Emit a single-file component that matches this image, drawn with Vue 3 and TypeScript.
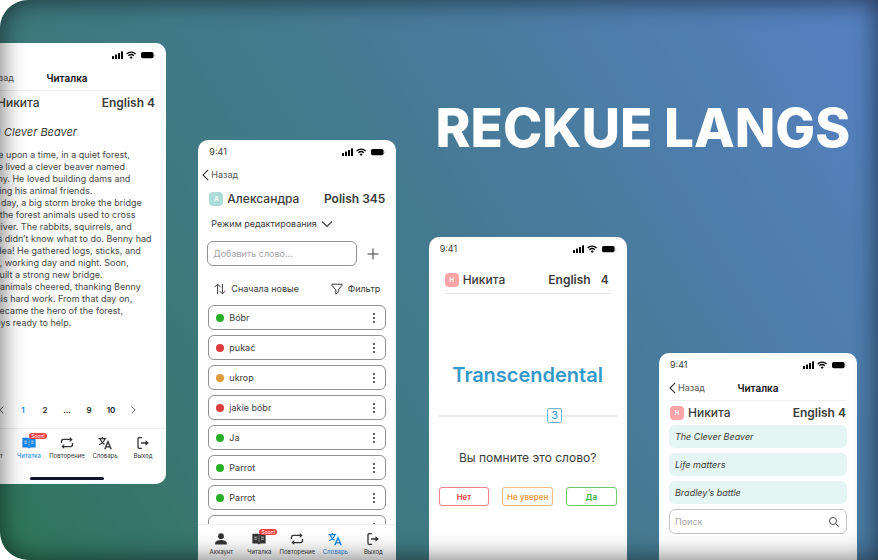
<script setup lang="ts">
import { ref } from 'vue'

type Level = 'good' | 'bad' | 'mid'

interface Word {
  id: number
  text: string
  level: Level
}

interface Tab {
  icon: string
  label: string
  soon?: boolean
}

const tabs: Tab[] = [
  { icon: 'account', label: 'Аккаунт' },
  { icon: 'book', label: 'Читалка', soon: true },
  { icon: 'repeat', label: 'Повторение' },
  { icon: 'translate', label: 'Словарь' },
  { icon: 'exit', label: 'Выход' },
]

const words: Word[] = [
  { id: 1, text: 'Bóbr', level: 'good' },
  { id: 2, text: 'pukać', level: 'bad' },
  { id: 3, text: 'ukrop', level: 'mid' },
  { id: 4, text: 'jakie bóbr', level: 'bad' },
  { id: 5, text: 'Ja', level: 'good' },
  { id: 6, text: 'Parrot', level: 'good' },
  { id: 7, text: 'Parrot', level: 'good' },
  { id: 8, text: 'Parrot', level: 'good' },
]

const story: string[] = [
  'Once upon a time, in a quiet forest,',
  'there lived a clever beaver named',
  'Benny. He loved building dams and',
  'helping his animal friends.',
  'One day, a big storm broke the bridge',
  'that the forest animals used to cross',
  'the river. The rabbits, squirrels, and',
  'birds didn’t know what to do. Benny had',
  'an idea! He gathered logs, sticks, and',
  'mud, working day and night. Soon,',
  'he built a strong new bridge.',
  'The animals cheered, thanking Benny',
  'for his hard work. From that day on,',
  'he became the hero of the forest,',
  'always ready to help.',
]

const pages: string[] = ['1', '2', '...', '9', '10']
const texts: string[] = ['The Clever Beaver', 'Life matters', 'Bradley’s battle']

const newWord = ref('')
const search = ref('')
const level = ref(3)
</script>

<template>
  <main class="stage">
    <svg class="sprite" aria-hidden="true">
      <symbol id="i-status" viewBox="0 0 44 10">
        <rect x="0" y="6" width="2" height="3" rx=".5" />
        <rect x="3" y="4.6" width="2" height="4.4" rx=".5" />
        <rect x="6" y="3" width="2" height="6" rx=".5" />
        <rect x="9" y="1.3" width="2" height="7.7" rx=".5" />
        <path d="M14.6 3.9a6.6 6.6 0 0 1 9 0M16.4 5.8a4 4 0 0 1 5.4 0" fill="none" stroke="currentColor" stroke-width="1.4" />
        <path d="M17.6 7.2a2.2 2.2 0 0 1 3 0L19.1 8.9z" />
        <rect x="29" y="2" width="12.6" height="6.2" rx="1.8" />
        <path d="M42.6 4.2c.9.3.9 1.9 0 2.2z" opacity=".5" />
      </symbol>
      <symbol id="i-back" viewBox="0 0 7 12">
        <path d="M6.2 .8 1 6l5.2 5.2" fill="none" stroke="currentColor" stroke-width="1.1" />
      </symbol>
      <symbol id="i-down" viewBox="0 0 12 8">
        <path d="M1 1.5 6 6.5 11 1.5" fill="none" stroke="currentColor" stroke-width="1.1" />
      </symbol>
      <symbol id="i-plus" viewBox="0 0 12 12">
        <path d="M6 .5v11M.5 6h11" fill="none" stroke="currentColor" stroke-width="1" />
      </symbol>
      <symbol id="i-sort" viewBox="0 0 12 12">
        <path d="M3.6 11V1.2M.6 4.2l3-3 3 3M8.4 1v9.8M5.6 8l2.8 2.8L11.4 8" fill="none" stroke="currentColor" stroke-width="1" />
      </symbol>
      <symbol id="i-filter" viewBox="0 0 12 12">
        <path d="M1 1.2h10v1.3L7.2 6.8v2.6L4.8 11V6.8L1 2.5z" fill="none" stroke="currentColor" stroke-width="1" stroke-linejoin="round" />
      </symbol>
      <symbol id="i-dots" viewBox="0 0 4 12">
        <circle cx="2" cy="2" r="1.1" /><circle cx="2" cy="6" r="1.1" /><circle cx="2" cy="10" r="1.1" />
      </symbol>
      <symbol id="i-search" viewBox="0 0 12 12">
        <circle cx="5" cy="5" r="3.6" fill="none" stroke="currentColor" stroke-width=".9" />
        <path d="m7.6 7.6 3.2 3.2" fill="none" stroke="currentColor" stroke-width="1" />
      </symbol>
      <symbol id="i-account" viewBox="0 0 14 14">
        <circle cx="7" cy="4.2" r="2.9" />
        <path d="M1.2 12.4V11c0-2 3.4-3 5.8-3s5.8 1 5.8 3v1.4z" />
      </symbol>
      <symbol id="i-book" viewBox="0 0 14 14">
        <path fill-rule="evenodd" d="M.4 1.8h5.4c.6 0 1 .3 1.2.6.2-.3.6-.6 1.2-.6h5.4v9.8H8.4L7 12.6 5.6 11.6H.4zM6.8 3.2v7h.4v-7zM2.3 4.8v.8h2.6v-.8zM2.3 6.8v.8h2.6v-.8zM9.1 4.8v.8h2.6v-.8zM9.1 6.8v.8h2.6v-.8z" />
      </symbol>
      <symbol id="i-repeat" viewBox="0 0 14 14">
        <path d="M1.5 7V5.4q0-2 2-2h7M12.5 7v1.6q0 2-2 2h-7" fill="none" stroke="currentColor" stroke-width="1.3" />
        <path d="M9.8.9 12.6 3.4 9.8 5.9zM4.2 8.1 1.4 10.6l2.8 2.5z" />
      </symbol>
      <symbol id="i-translate" viewBox="0 0 14 14">
        <path d="M.5 2.7h7.8M4.3.9v1.8M6.8 2.8C6.1 5.3 4 7.4 1 8.8M2.2 3.3C3 5.4 4.4 7.2 6.5 8.3" fill="none" stroke="currentColor" stroke-width="1.2" />
        <path d="M6.8 13.3 10 5.7l3.2 7.6M7.9 10.9h4.2" fill="none" stroke="currentColor" stroke-width="1.4" />
      </symbol>
      <symbol id="i-exit" viewBox="0 0 14 14">
        <path d="M6 1.7H3q-1 0-1 1v8.6q0 1 1 1h3M5 7h6" fill="none" stroke="currentColor" stroke-width="1.3" />
        <path d="M9.5 4.2 12.9 7 9.5 9.8z" />
      </symbol>
    </svg>

    <div class="board">
      <h1 class="title">RECKUE LANGS</h1>

      <section class="phone reader">
        <div class="status">
          <span></span>
          <svg class="status-icons"><use href="#i-status" /></svg>
        </div>
        <header class="head">
          <a class="back" href="#"><svg class="back-icon"><use href="#i-back" /></svg>Назад</a>
          <h2 class="head-title">Читалка</h2>
        </header>
        <div class="user">
          <span class="avatar pink"></span>
          <span class="name">Никита</span>
          <strong class="lang">English 4</strong>
        </div>
        <h3 class="story-title">The Clever Beaver</h3>
        <p class="story">
          <span v-for="line in story" :key="line" class="line">{{ line }}</span>
        </p>
        <nav class="pages">
          <button type="button" class="page" aria-label="Предыдущая"><svg class="prev"><use href="#i-back" /></svg></button>
          <button v-for="p in pages" :key="p" type="button" class="page" :class="{ current: p === '1' }">{{ p }}</button>
          <button type="button" class="page" aria-label="Следующая"><svg class="prev next"><use href="#i-back" /></svg></button>
        </nav>
        <nav class="tabs">
          <a v-for="t in tabs" :key="t.icon" href="#" class="tab" :class="{ active: t.icon === 'book' }">
            <svg class="tab-icon"><use :href="'#i-' + t.icon" /></svg>
            <span>{{ t.label }}</span>
            <em v-if="t.soon" class="soon">Soon!</em>
          </a>
        </nav>
        <div class="home"></div>
      </section>

      <section class="phone dictionary">
        <div class="status">
          <span>9:41</span>
          <svg class="status-icons"><use href="#i-status" /></svg>
        </div>
        <header class="head plain">
          <a class="back" href="#"><svg class="back-icon"><use href="#i-back" /></svg>Назад</a>
        </header>
        <div class="user">
          <span class="avatar mint">А</span>
          <span class="name">Александра</span>
          <strong class="lang">Polish 345</strong>
        </div>
        <button type="button" class="mode">Режим редактирования <svg class="mode-icon"><use href="#i-down" /></svg></button>
        <form class="add" @submit.prevent>
          <input v-model="newWord" class="field" type="text" placeholder="Добавить слово..." aria-label="Добавить слово" />
          <button type="submit" class="plus" aria-label="Добавить"><svg class="icon"><use href="#i-plus" /></svg></button>
        </form>
        <div class="tools">
          <button type="button" class="tool"><svg class="icon"><use href="#i-sort" /></svg>Сначала новые</button>
          <button type="button" class="tool"><svg class="icon"><use href="#i-filter" /></svg>Фильтр</button>
        </div>
        <ul class="words">
          <li v-for="w in words" :key="w.id" class="word">
            <i class="dot" :class="w.level"></i>
            <span>{{ w.text }}</span>
            <button type="button" class="more" aria-label="Меню"><svg class="dots"><use href="#i-dots" /></svg></button>
          </li>
        </ul>
        <nav class="tabs">
          <a v-for="t in tabs" :key="t.icon" href="#" class="tab" :class="{ active: t.icon === 'translate' }">
            <svg class="tab-icon"><use :href="'#i-' + t.icon" /></svg>
            <span>{{ t.label }}</span>
            <em v-if="t.soon" class="soon">Soon!</em>
          </a>
        </nav>
      </section>

      <section class="phone quiz">
        <div class="status">
          <span>9:41</span>
          <svg class="status-icons"><use href="#i-status" /></svg>
        </div>
        <div class="user ruled">
          <span class="avatar pink">Н</span>
          <span class="name">Никита</span>
          <strong class="lang split"><span>English</span><span>4</span></strong>
        </div>
        <h2 class="term">Transcendental</h2>
        <div class="scale">
          <input v-model.number="level" class="range" type="range" min="0" max="5" aria-label="Уровень" />
          <output class="mark">{{ level }}</output>
        </div>
        <p class="question">Вы помните это слово?</p>
        <div class="answers">
          <button type="button" class="answer no">Нет</button>
          <button type="button" class="answer maybe">Не уверен</button>
          <button type="button" class="answer yes">Да</button>
        </div>
      </section>

      <section class="phone library">
        <div class="status">
          <span>9:41</span>
          <svg class="status-icons"><use href="#i-status" /></svg>
        </div>
        <header class="head">
          <a class="back" href="#"><svg class="back-icon"><use href="#i-back" /></svg>Назад</a>
          <h2 class="head-title">Читалка</h2>
        </header>
        <div class="user">
          <span class="avatar pink">Н</span>
          <span class="name">Никита</span>
          <strong class="lang">English 4</strong>
        </div>
        <div class="texts">
          <a v-for="t in texts" :key="t" href="#" class="text">{{ t }}</a>
          <label class="search">
            <input v-model="search" type="search" placeholder="Поиск" aria-label="Поиск" />
            <svg class="icon"><use href="#i-search" /></svg>
          </label>
        </div>
      </section>
    </div>
  </main>
</template>

<style>
body {
  margin: 0;
  background: #fff;
}
</style>

<style scoped>
* {
  box-sizing: border-box;
}

.stage {
  position: relative;
  overflow: hidden;
  border-radius: 28px 0 0 28px;
  background: linear-gradient(58deg, #2d7658, #3a7672 20%, #417a88 42%, #467a94 56%, #5681c4);
  font-family: Inter, "Liberation Sans", sans-serif;
  font-size: 9px;
  line-height: 12px;
  color: #3c3c3c;
}

.stage::after {
  content: "";
  position: absolute;
  inset: 0;
  border-radius: inherit;
  box-shadow: inset 0 0 26px rgba(0, 0, 0, 0.6);
  pointer-events: none;
}

/* The first phone runs off the left edge of the stage. */
.board {
  display: grid;
  grid-template-columns: repeat(4, 198px);
  grid-template-rows: 100vh;
  justify-content: space-between;
  margin: 0 21px 0 -32px;
}

.sprite {
  position: absolute;
  width: 0;
  height: 0;
}

h1,
h2,
h3,
p,
ul {
  margin: 0;
  padding: 0;
}

button,
input {
  margin: 0;
  padding: 0;
  border: 0;
  background: none;
  font: inherit;
  color: inherit;
}

a {
  color: inherit;
  text-decoration: none;
}

svg {
  display: block;
  flex: none;
  fill: currentColor;
}

.title {
  grid-area: 1 / 3 / 2 / 5;
  align-self: start;
  justify-self: center;
  margin-top: 96px;
  font-size: 53px;
  line-height: 64px;
  font-weight: 800;
  white-space: nowrap;
  color: #fff;
}

.phone {
  grid-row: 1;
  display: flex;
  flex-direction: column;
  min-width: 0;
  min-height: 0;
  border-radius: 10px 10px 0 0;
  background: #fff;
  overflow: hidden;
}

.reader {
  grid-column: 1;
  align-self: start;
  min-height: 441px;
  margin-top: 43px;
  border-radius: 10px;
}

.dictionary {
  grid-column: 2;
  margin-top: 140px;
}

.quiz {
  grid-column: 3;
  margin-top: 237px;
}

.library {
  grid-column: 4;
  margin-top: 353px;
}

.status {
  display: flex;
  align-items: center;
  justify-content: space-between;
  height: 23px;
  padding: 0 10px 0 11px;
}

.status-icons {
  width: 44px;
  height: 10px;
  color: #000;
}

.head {
  display: grid;
  grid-template-columns: 1fr auto 1fr;
  align-items: center;
  height: 25px;
  margin: 0 10px;
  border-bottom: 1px solid #eee;
}

.head.plain {
  height: 24px;
  margin: 0 4px;
  border: 0;
}

.back {
  display: flex;
  align-items: center;
  gap: 2px;
  color: #555;
}

.back-icon {
  width: 7px;
  height: 12px;
  color: #333;
}

.head-title {
  font-size: 10px;
  font-weight: 600;
  color: #111;
}

.user {
  display: flex;
  align-items: center;
  height: 24px;
  padding: 0 11px;
  font-size: 12px;
}

.avatar {
  width: 14px;
  height: 14px;
  margin-right: 4px;
  border-radius: 4px;
  font-size: 6px;
  font-weight: 600;
  line-height: 14px;
  text-align: center;
  color: #fff;
}

.avatar.pink {
  background: #ffa5a8;
}

.avatar.mint {
  background: #aedcd9;
}

.name {
  font-weight: 500;
}

.lang {
  margin-left: auto;
  font-weight: 600;
}

.split {
  display: flex;
  gap: 10px;
}

.story-title {
  margin: 7px 13px;
  font-size: 11px;
  line-height: 20px;
  font-weight: 400;
  font-style: italic;
}

.story {
  padding: 0 13px;
  white-space: nowrap;
  color: #484848;
}

.line {
  display: block;
}

.pages {
  display: flex;
  justify-content: center;
  height: 20px;
  margin: auto 0 8px;
}

.page {
  display: grid;
  place-items: center;
  width: 22px;
  font-size: 8px;
  font-weight: 600;
  color: #222;
}

.page.current {
  color: #1684e8;
}

.prev {
  width: 5px;
  height: 8px;
}

.next {
  transform: rotate(180deg);
}

.tabs {
  display: flex;
  padding: 7px 4px 4px;
  border-top: 1px solid #eee;
}

.tab {
  position: relative;
  flex: 1 1 0;
  display: flex;
  flex-direction: column;
  align-items: center;
  gap: 2px;
  min-width: 0;
  font-size: 6px;
  line-height: 8px;
  white-space: nowrap;
  color: #333;
}

.tab.active {
  color: #1684e8;
}

.tab-icon {
  width: 14px;
  height: 14px;
}

.soon {
  position: absolute;
  top: -3px;
  left: 50%;
  width: 18px;
  height: 6px;
  border-radius: 3px;
  background: #ee4141;
  font-size: 5px;
  line-height: 6px;
  font-style: normal;
  text-align: center;
  color: #fff;
}

.home {
  width: 74px;
  height: 3px;
  margin: 13px auto 4px;
  border-radius: 2px;
  background: #11132f;
}

.mode {
  display: flex;
  align-items: center;
  gap: 4px;
  height: 24px;
  margin: 1px 13px 5px;
}

.mode-icon {
  width: 12px;
  height: 8px;
}

.icon {
  width: 12px;
  height: 12px;
}

.add {
  display: flex;
  align-items: center;
  padding: 0 17px 0 9px;
  gap: 10px;
}

.field {
  flex: 1;
  min-width: 0;
  height: 25px;
  padding: 0 5px;
  border: 1px solid #909090;
  border-radius: 6px;
}

input::placeholder {
  color: #a6a6a6;
  opacity: 1;
}

.tools {
  display: flex;
  justify-content: space-between;
  height: 20px;
  margin: 13px 16px 6px;
}

.tool {
  display: flex;
  align-items: center;
  gap: 5px;
}

.words {
  display: flex;
  flex-direction: column;
  flex: 1;
  min-height: 0;
  gap: 5px;
  padding: 0 10px;
  overflow: hidden;
  list-style: none;
}

.word {
  flex: none;
  display: flex;
  align-items: center;
  gap: 5px;
  height: 25px;
  padding: 0 9px 0 7px;
  border: 1px solid #909090;
  border-radius: 6px;
}

.dot {
  width: 8px;
  height: 8px;
  border-radius: 50%;
}

.dot.good {
  background: #29ad29;
}

.dot.bad {
  background: #dd3d3d;
}

.dot.mid {
  background: #e09a3e;
}

.more {
  margin-left: auto;
}

.dots {
  width: 4px;
  height: 12px;
}

.user.ruled {
  height: 28px;
  margin: 6px 16px 0;
  padding: 0 2px 0 0;
  border-bottom: 1px solid #e6e6e6;
}

.term {
  margin-top: 67px;
  font-size: 20px;
  line-height: 28px;
  font-weight: 600;
  text-align: center;
  color: #3499c9;
}

.scale {
  position: relative;
  height: 16px;
  margin: 19px 10px 0;
}

.range {
  appearance: none;
  display: block;
  width: 100%;
  height: 16px;
  background: linear-gradient(#ebebeb, #ebebeb) center / 100% 2px no-repeat;
}

.range::-webkit-slider-thumb {
  appearance: none;
  width: 15px;
  height: 15px;
  opacity: 0;
}

.mark {
  position: absolute;
  top: 0;
  left: 61%;
  width: 15px;
  height: 15px;
  border: 1px solid #6db5da;
  border-radius: 2px;
  background: #fff;
  font-size: 11px;
  line-height: 13px;
  text-align: center;
  color: #3499c9;
  pointer-events: none;
}

.question {
  margin-top: 26px;
  font-size: 12px;
  line-height: 16px;
  text-align: center;
}

.answers {
  display: grid;
  grid-template-columns: repeat(3, 1fr);
  gap: 13px;
  padding: 21px 10px 0;
}

.answer {
  height: 19px;
  border: 1px solid;
  border-radius: 3px;
  font-size: 8px;
  font-weight: 600;
  white-space: nowrap;
}

.no {
  border-color: #ef8585;
  color: #de4141;
}

.maybe {
  border-color: #f0bd80;
  color: #e69a45;
}

.yes {
  border-color: #70cb70;
  color: #35b235;
}

.texts {
  display: grid;
  gap: 5px;
  padding: 0 10px;
}

.text {
  height: 23px;
  padding: 0 6px;
  border-radius: 6px;
  background: #e4f5f3;
  line-height: 23px;
  font-style: italic;
}

.search {
  display: flex;
  align-items: center;
  height: 25px;
  padding: 0 6px 0 5px;
  border: 1px solid #c4c4c4;
  border-radius: 6px;
}

.search input {
  flex: 1;
  min-width: 0;
}
</style>
